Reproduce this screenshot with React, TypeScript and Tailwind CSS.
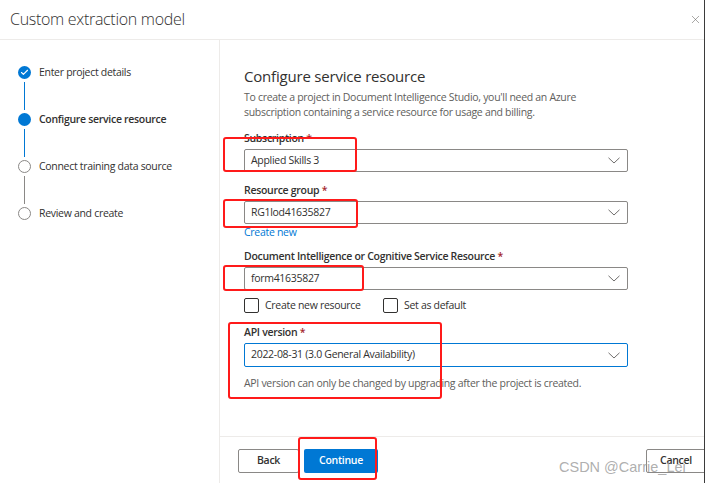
import { X, Check } from 'lucide-react';

const font = { fontFamily: '"Open Sans", "Noto Sans", sans-serif' };

const steps = [
   { label: 'Enter project details', state: 'done' },
   { label: 'Configure service resource', state: 'current' },
   { label: 'Connect training data source', state: 'todo' },
   { label: 'Review and create', state: 'todo' },
];

const Chevron = () => (
   <svg width="12" height="7" viewBox="0 0 12 7" fill="none" className="text-[#605e5c]">
      <polyline points="0.5,0.8 6,6 11.5,0.8" stroke="currentColor" strokeWidth="0.9" />
   </svg>
);

const Dropdown = ({ value, focused }: { value: string; focused?: boolean }) => (
   <div
      className={`flex items-center justify-between h-[23px] w-[384px] pl-[6px] pr-[7px] rounded-[2px] border ${focused ? 'border-[#0078d4]' : 'border-[#8a8886]'}`}
   >
      <span className="text-[10.5px] tracking-[-0.3px] text-[#323130]">{value}</span>
      <Chevron />
   </div>
);

const Label = ({ children }: { children: React.ReactNode }) => (
   <div className="text-[10.5px] tracking-[-0.3px] font-semibold text-[#323130] leading-[14px] mb-[4px]">
      {children} <span className="text-[#a4262c]">*</span>
   </div>
);

export default function App() {
   return (
      <div style={font} className="relative w-[705px] h-[483px] overflow-hidden bg-white">
         {/* Header */}
         <div className="flex items-center justify-between h-[40px] pl-[10px] pr-[3px] pb-[1px] border-b border-[#edebe9]">
            <span className="text-[16px] tracking-[-0.3px] font-light text-[#323130]">Custom extraction model</span>
            <X size={13} strokeWidth={1} className="text-[#605e5c]" />
         </div>

         <div className="flex h-[443px]">
            {/* Steps */}
            <div className="w-[220px] border-r border-[#edebe9] pt-[26px] pl-[18px]">
               {steps.map((s, i) => (
                  <div key={s.label} className="flex flex-col">
                     <div className="flex items-center gap-[8px] h-[13px]">
                        {s.state === 'done' && (
                           <div className="w-[13px] h-[13px] rounded-full bg-[#0078d4] flex items-center justify-center">
                              <Check size={9} strokeWidth={3} className="text-white" />
                           </div>
                        )}
                        {s.state === 'current' && <div className="w-[13px] h-[13px] rounded-full bg-[#0078d4]" />}
                        {s.state === 'todo' && (
                           <div className="w-[13px] h-[13px] rounded-full border border-[#8a8886] bg-white" />
                        )}
                        <span
                           className={`text-[10.5px] tracking-[-0.3px] text-[#323130] ${s.state === 'current' ? 'font-semibold' : ''}`}
                        >
                           {s.label}
                        </span>
                     </div>
                     {i < steps.length - 1 && (
                        <div
                           className={`ml-[6px] w-[1px] h-[28px] my-[3px] ${i < 2 ? 'bg-[#0078d4]' : 'bg-[#8a8886]'}`}
                        />
                     )}
                  </div>
               ))}
            </div>

            {/* Main */}
            <div className="flex-1 flex flex-col">
               <div className="flex-1 pl-[24px] pt-[26px]">
                  <h2 className="text-[15px] tracking-[-0.2px] text-[#323130] leading-[20px] mb-[4px]">
                     Configure service resource
                  </h2>
                  <p className="text-[10.5px] tracking-[-0.3px] text-[#605e5c] leading-[15px] w-[350px] mb-[11px]">
                     To create a project in Document Intelligence Studio, you'll need an Azure subscription containing a
                     service resource for usage and billing.
                  </p>

                  <Label>Subscription</Label>
                  <Dropdown value="Applied Skills 3" />

                  <div className="mt-[11px]">
                     <Label>Resource group</Label>
                     <Dropdown value="RG1lod41635827" />
                     <div className="text-[10.5px] tracking-[-0.3px] text-[#0078d4] leading-[14px] mt-[1px]">Create new</div>
                  </div>

                  <div className="mt-[10px]">
                     <Label>Document Intelligence or Cognitive Service Resource</Label>
                     <Dropdown value="form41635827" />
                     <div className="flex items-center mt-[8px] h-[15px]">
                        <div className="flex items-center gap-[6px] w-[139px]">
                           <div className="w-[15px] h-[15px] border border-[#323130] rounded-[2px]" />
                           <span className="text-[10.5px] tracking-[-0.3px] text-[#323130]">Create new resource</span>
                        </div>
                        <div className="flex items-center gap-[6px]">
                           <div className="w-[15px] h-[15px] border border-[#323130] rounded-[2px]" />
                           <span className="text-[10.5px] tracking-[-0.3px] text-[#323130]">Set as default</span>
                        </div>
                     </div>
                  </div>

                  <div className="mt-[12px]">
                     <Label>API version</Label>
                     <div className="w-[384px] h-[24px] border border-[#0078d4] rounded-[2px] flex items-center justify-between pl-[6px] pr-[7px]">
                        <span className="text-[10.5px] tracking-[-0.3px] text-[#323130]">
                           2022-08-31 (3.0 General Availability)
                        </span>
                        <Chevron />
                     </div>
                     <p className="text-[10.5px] tracking-[-0.3px] text-[#605e5c] mt-[9px] leading-[14px]">
                        API version can only be changed by upgrading after the project is created.
                     </p>
                  </div>
               </div>

               {/* Footer */}
               <div className="h-[47px] border-t border-[#edebe9] flex items-center pl-[18px] pt-[2px]">
                  <button className="h-[24px] w-[61px] border border-[#8a8886] rounded-[2px] text-[10.5px] tracking-[-0.3px] font-semibold text-[#323130]">
                     Back
                  </button>
                  <button className="ml-[5px] h-[24px] w-[74px] bg-[#0078d4] rounded-[2px] text-[10.5px] tracking-[-0.3px] font-semibold text-white">
                     Continue
                  </button>
                  <button className="ml-auto mr-[-5px] h-[24px] w-[64px] border border-[#8a8886] rounded-[2px] text-[10.5px] tracking-[-0.3px] font-semibold text-[#323130] pr-[4px]">
                     Cancel
                  </button>
               </div>
            </div>
         </div>

         {/* Right edge of the captured window */}
         <div className="absolute right-0 top-0 w-[1px] h-full bg-[#3b3b3b]" />

         {/* Annotations */}
         <div className="absolute left-[223px] top-[137px] w-[134px] h-[35px] border-2 border-[#ff1a1a] rounded-[3px]" />
         <div className="absolute left-[223px] top-[199px] w-[135px] h-[29px] border-2 border-[#ff1a1a] rounded-[3px]" />
         <div className="absolute left-[223px] top-[265px] w-[141px] h-[26px] border-2 border-[#ff1a1a] rounded-[3px]" />
         <div className="absolute left-[228px] top-[322px] w-[214px] h-[77px] border-2 border-[#ff1a1a] rounded-[3px]" />
         <div className="absolute left-[298px] top-[437px] w-[79px] h-[43px] border-2 border-[#ff1a1a] rounded-[3px]" />

         {/* Watermark */}
         <div
            className="absolute left-[559px] top-[457px] text-[14.5px] text-[#9a9a9a]/80"
            style={{ fontFamily: '"Liberation Sans", Arial, sans-serif' }}
         >
            CSDN @Carrie_Lei
         </div>
      </div>
   );
}
